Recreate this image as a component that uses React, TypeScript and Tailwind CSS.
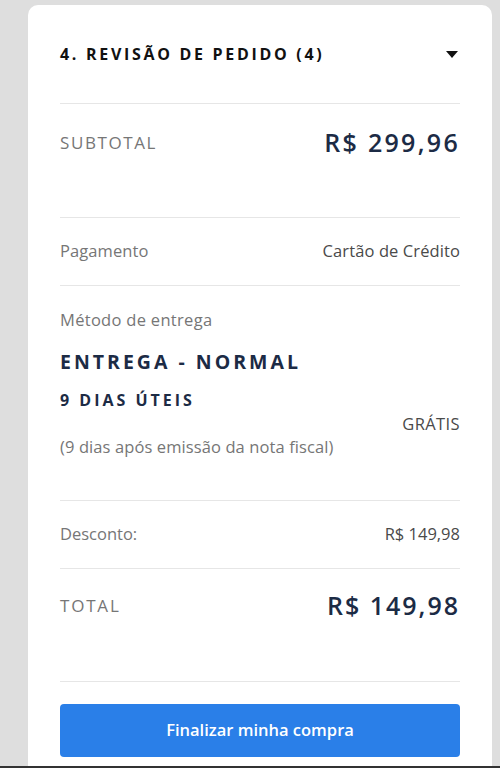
import React from "react";

const Row: React.FC<{ label: string; value: string; className?: string }> = ({ label, value, className }) => (
    <div className={`flex items-center justify-between ${className ?? ""}`}>
        <span className="text-[16.5px] tracking-[0.1px] text-[#767676]">{label}</span>
        <span className="text-[16.5px] tracking-[0.1px] text-[#4a4a4a]">{value}</span>
    </div>
);

const App: React.FC = () => {
    return (
        <div className="w-[500px] h-[768px] bg-[#dedede] overflow-hidden font-['Open_Sans','Lato',sans-serif] border-b-2 border-[#333]">
            <div className="ml-[28px] mt-[5px] w-[464px] h-[770px] bg-white rounded-t-[10px] px-8">
                <div className="flex items-center justify-between h-[98px]">
                    <h2 className="text-[16px] font-bold tracking-[2.7px] text-[#111]">4. REVISÃO DE PEDIDO (4)</h2>
                    <svg width="12" height="7" viewBox="0 0 12 7" className="mr-[2px]">
                        <path d="M0 0h12L6 7z" fill="#111" />
                    </svg>
                </div>
                <div className="h-px bg-[#e6e6e6]" />
                <div className="flex items-center justify-between h-[113px] pb-[36px]">
                    <span className="text-[17px] tracking-[1.6px] text-[#767676]">SUBTOTAL</span>
                    <span className="text-[25px] font-semibold tracking-[2.3px] text-[#1c2b45]">R$ 299,96</span>
                </div>
                <div className="h-px bg-[#e6e6e6]" />
                <Row label="Pagamento" value="Cartão de Crédito" className="h-[67px]" />
                <div className="h-px bg-[#e6e6e6]" />
                <div className="pt-[23px] h-[214px]">
                    <div className="text-[16.5px] tracking-[0.3px] text-[#767676] leading-[22px]">Método de entrega</div>
                    <div className="mt-[18px] text-[19.5px] font-bold tracking-[3px] text-[#1c2b45] leading-[26px]">ENTREGA - NORMAL</div>
                    <div className="mt-[15px] text-[16px] font-bold tracking-[3px] text-[#1c2b45] leading-[20px]">9 DIAS ÚTEIS</div>
                    <div className="flex justify-end mt-[3px] text-[16.5px] tracking-[0.4px] text-[#4a4a4a] leading-[22px]">GRÁTIS</div>
                    <div className="mt-[1px] text-[16.5px] tracking-[0.1px] text-[#767676] leading-[22px]">(9 dias após emissão da nota fiscal)</div>
                </div>
                <div className="h-px bg-[#e6e6e6]" />
                <div className="flex items-center justify-between h-[67px]">
                    <span className="text-[16.5px] text-[#767676]">Desconto:</span>
                    <span className="text-[16.5px] text-[#4a4a4a]">R$ 149,98</span>
                </div>
                <div className="h-px bg-[#e6e6e6]" />
                <div className="flex items-center justify-between h-[112px] pb-[38px]">
                    <span className="text-[17px] tracking-[1.8px] text-[#767676]">TOTAL</span>
                    <span className="text-[25px] font-semibold tracking-[2px] text-[#1c2b45]">R$ 149,98</span>
                </div>
                <div className="h-px bg-[#e6e6e6]" />
                <button className="mt-[22px] w-full h-[53px] rounded-[4px] bg-[#2a7fe8] text-white text-[16.5px] font-semibold">
                    Finalizar minha compra
                </button>
            </div>
        </div>
    );
};

export default App;
